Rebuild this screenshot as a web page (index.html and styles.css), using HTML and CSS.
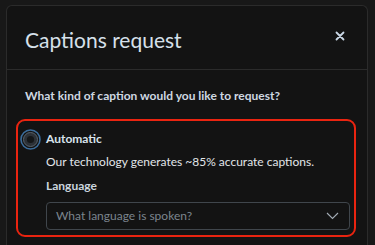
FILE: index.html
```html
<!DOCTYPE html>
<html lang="en">
<head>
    <meta charset="UTF-8">
    <meta name="viewport" content="width=device-width, initial-scale=1.0">
    <title>Captions request</title>
    <link rel="stylesheet" href="styles.css">
</head>
<body>

    <!-- Modal -->
    <div class="modal">
        <div class="modal-header">
            <h1 class="modal-title">Captions request</h1>
            <button class="close-btn" aria-label="Close">
                <svg width="10" height="10" viewBox="0 0 10 10">
                    <path d="M1.5 1.5 L8.5 8.5 M8.5 1.5 L1.5 8.5" stroke="#c9d7e5" stroke-width="1.8" stroke-linecap="round"/>
                </svg>
            </button>
        </div>

        <div class="modal-body">
            <p class="question">What kind of caption would you like to request?</p>

            <!-- Selected option -->
            <div class="option">
                <svg class="radio" width="21" height="21" viewBox="0 0 21 21">
                    <circle cx="10.5" cy="10.5" r="9.5" fill="none" stroke="#3b6c9b" stroke-width="1.6"/>
                    <circle cx="10.5" cy="10.5" r="7" fill="#2c3137" stroke="#59636d" stroke-width="1"/>
                    <circle cx="10.5" cy="10.5" r="3.6" fill="#141618"/>
                </svg>
                <div class="option-content">
                    <div class="option-label">Automatic</div>
                    <div class="option-desc">Our technology generates ~85% accurate captions.</div>
                    <div class="field-label">Language</div>
                    <div class="select">
                        <span class="placeholder">What language is spoken?</span>
                        <svg width="13" height="8" viewBox="0 0 13 8">
                            <path d="M1 1 L6.5 6.5 L12 1" fill="none" stroke="#a3acb5" stroke-width="1.1"/>
                        </svg>
                    </div>
                </div>
            </div>
        </div>
    </div>

</body>
</html>
```

FILE: styles.css
```css
/* General Styles */
body {
    margin: 0;
    padding: 5px 0 0 6px;
    background-color: #181818;
    font-family: Lato, "Open Sans", sans-serif;
    color: #d9e1e9;
    height: 240px;
    overflow: hidden;
}

/* Modal */
.modal {
    width: 360px;
    height: 239px;
    background-color: #131313;
    border: 1px solid #2b2b2b;
    border-bottom: none;
    border-radius: 6px 6px 0 0;
}

.modal-header {
    height: 63px;
    display: flex;
    align-items: center;
    justify-content: space-between;
    padding: 0 22px 0 18px;
    border-bottom: 1px solid #2b2b2b;
}

.modal-title {
    margin: 0;
    font-size: 21px;
    font-weight: 400;
    color: #d6e0ea;
    padding-top: 3px;
}

.close-btn {
    background: none;
    border: none;
    padding: 0;
    display: flex;
    margin-top: -4px;
    cursor: pointer;
}

/* Body */
.modal-body {
    padding: 16px 11px 0 9px;
}

.question {
    margin: 0 0 13px 9px;
    font-size: 12px;
    font-weight: 700;
    line-height: 20px;
    color: #cfd8e1;
}

.option {
    display: flex;
    gap: 5px;
    padding: 8px 4px 5px 2px;
    border: 2px solid #ea2410;
    border-radius: 9px;
}

.radio {
    flex-shrink: 0;
    margin-top: 0;
}

.option-content {
    flex: 1;
    font-size: 12px;
    line-height: 20px;
}

.option-label {
    font-weight: 700;
    color: #d9e3ec;
}

.option-desc {
    margin-top: 3px;
    color: #e2e6ea;
}

.field-label {
    margin-top: 4px;
    font-weight: 700;
    color: #cbd5de;
}

.select {
    margin-top: 6px;
    height: 26px;
    display: flex;
    align-items: center;
    justify-content: space-between;
    padding: 0 10px 0 9px;
    border: 1px solid #40464c;
    border-radius: 4px;
}

.placeholder {
    color: #7c858e;
}
```
